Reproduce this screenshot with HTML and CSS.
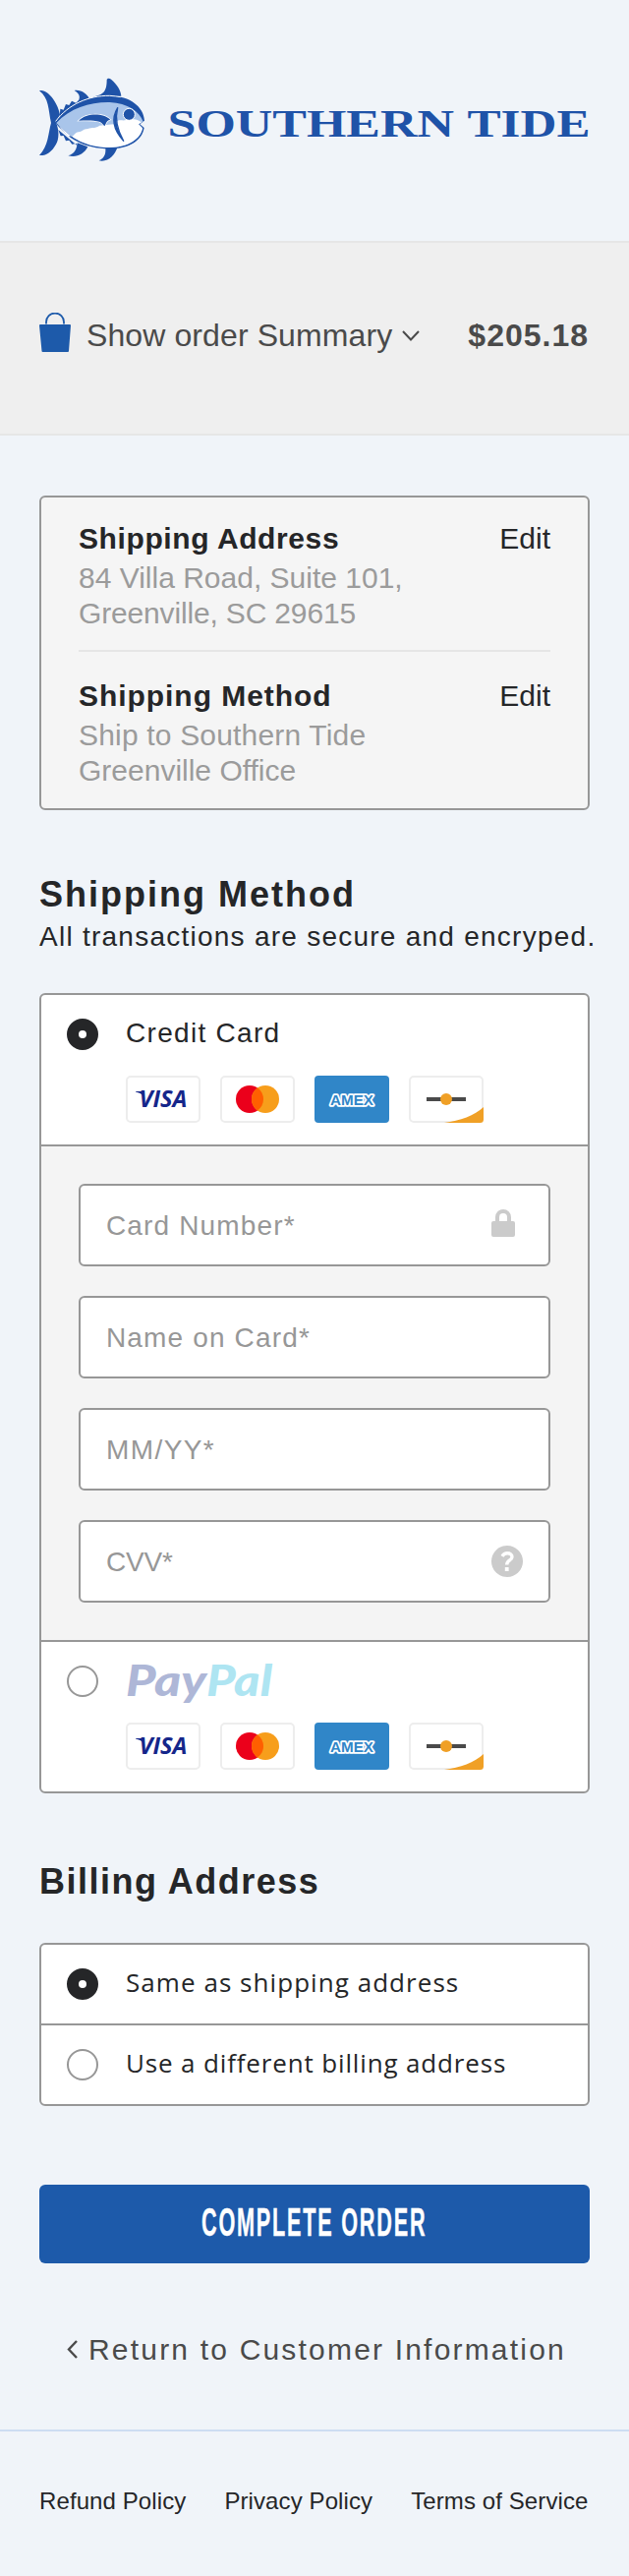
FILE: index.html
```
<!DOCTYPE html>
<html lang="en">
<head>
<meta charset="utf-8">
<title>Southern Tide – Checkout</title>
<link rel="stylesheet" href="styles.css">
</head>
<body>
<svg class="sprite" aria-hidden="true">
  <symbol id="visa" viewBox="0 0 76 48">
    <rect x="1" y="1" width="74" height="46" rx="4" fill="#fff" stroke="#ededed" stroke-width="2"/>
    <path d="M10 16h6.500l1.500 5c-2-2.500-4.500-3.700-8-4.400z" fill="#15268a"/>
    <text x="13.500" y="32" class="visa-word" textLength="49" lengthAdjust="spacingAndGlyphs">VISA</text>
  </symbol>
  <symbol id="mastercard" viewBox="0 0 76 48">
    <rect x="1" y="1" width="74" height="46" rx="4" fill="#fff" stroke="#ededed" stroke-width="2"/>
    <circle cx="30" cy="24" r="14" fill="#eb001b"/>
    <circle cx="46" cy="24" r="14" fill="#f79e1b"/>
    <path d="M38 12.500a14 14 0 0 1 0 23a14 14 0 0 1 0-23z" fill="#ff5f00"/>
  </symbol>
  <symbol id="amex" viewBox="0 0 76 48">
    <rect width="76" height="48" rx="4" fill="#3086c8"/>
    <text x="16" y="30" class="amex-word" textLength="44" lengthAdjust="spacingAndGlyphs">AMEX</text>
  </symbol>
  <symbol id="discover" viewBox="0 0 76 48">
    <rect x="1" y="1" width="74" height="46" rx="4" fill="#fff" stroke="#ededed" stroke-width="2"/>
    <rect x="18" y="22" width="40" height="4" fill="#4a4a4a"/>
    <circle cx="38" cy="24" r="6" fill="#f0a026"/>
    <path d="M36 48C52 46 67 40.500 76 32v12.500a3.500 3.500 0 0 1-3.500 3.500z" fill="#f0a026"/>
  </symbol>
</svg>

<header class="header">
  <svg class="logo" viewBox="0 0 560 84" role="img" aria-label="Southern Tide">
    <g transform="scale(.33333) translate(-30 -30)">
      <g fill="#1f53a8">
        <path d="M30 67C56 59 88 108 93 140L80 162C92 188 90 216 81 230C68 254 50 266 30 264C58 236 57 196 66 165C57 124 60 90 30 67Z"/>
        <path d="M236 34C237 28 244 28 250 33C266 46 279 66 280 83L196 86C224 78 236 72 236 34Z"/>
        <path d="M137 66C158 63 176 77 183 92L143 106C157 92 156 77 137 66Z"/>
        <path d="M92 146L94 122L104 125L111 108L121 111L129 98L142 104L150 96L165 96Z"/>
        <path d="M88 186L95 205L104 204L111 220L121 218L130 230L143 228L150 238Z"/>
        <path d="M118 265C138 260 145 244 146 226L178 238C166 262 142 272 118 265Z"/>
        <path d="M212 280C230 272 233 258 232 243L268 241C260 264 240 286 212 280Z"/>
      </g>
      <path d="M78 163C115 112 175 80 245 82C308 84 348 116 351 158L337 169L350 180C344 218 305 244 245 244C165 244 115 212 78 163Z" fill="#1f53a8"/>
      <path d="M80 160C118 109 180 81 245 82Q262 83 278 86" fill="none" stroke="#fff" stroke-width="3"/>
      <path d="M82 165C125 119 185 101 245 102C300 105 336 130 347 161L333 169L345 181C340 212 303 240 245 240C172 240 124 210 82 165Z" fill="#a9c5ea"/>
      <path d="M90 174C98 188 109 196 118 206L124 205C136 210 136 194 150 193C160 192 163 184 178 183C192 178 202 182 214 173L257 169C270 151 282 160 296 156C310 155 320 151 331 157L342 163L333 169L345 181C340 212 303 240 245 240C174 240 128 211 90 174Z" fill="#fff"/>
      <path d="M150 158C176 133 226 135 247 155C236 157 234 165 230 174C224 171 224 166 213 161C195 156 174 157 150 158Z" fill="#1f53a8" stroke="#fff" stroke-width="4" paint-order="stroke"/>
      <path d="M269 119C250 150 256 186 287 220C270 190 259 158 269 119Z" fill="#1f53a8" stroke="#1f53a8" stroke-width="4" stroke-linejoin="round"/>
      <circle cx="304" cy="139" r="18" fill="#1f53a8" stroke="#fff" stroke-width="3"/>
    </g>
    <text x="130.500" y="58.500" class="logo-word" textLength="291.500" lengthAdjust="spacingAndGlyphs">SOUTHERN</text>
    <text x="435.500" y="58.500" class="logo-word" textLength="125" lengthAdjust="spacingAndGlyphs">TIDE</text>
  </svg>
</header>

<section class="summary">
  <svg class="bag" viewBox="0 0 32 40">
    <path d="M7 12V10a9 9 0 0 1 18 0V12" transform="translate(0 -.5)" fill="none" stroke="#1d5aaa" stroke-width="1.800"/>
    <path d="M1 12H31a1 1 0 0 1 1 1L30 39a1 1 0 0 1-1 1H3.500a1 1 0 0 1-1-1L0 13a1 1 0 0 1 1-1z" fill="#1d5aaa"/>
  </svg>
  <span class="summary-label">Show order Summary</span>
  <svg class="chevron" viewBox="0 0 18 11"><path d="M1 1l8 8.500L17 1" fill="none" stroke="#4a4a4a" stroke-width="2"/></svg>
  <strong class="summary-total">$205.18</strong>
</section>

<main class="main">
  <section class="box review">
    <div class="review-item">
      <div class="review-head"><h3 class="review-title">Shipping Address</h3><a class="edit">Edit</a></div>
      <p class="review-text">84 Villa Road, Suite 101,<br><span class="review-city">Greenville, SC 29615</span></p>
    </div>
    <div class="review-item">
      <div class="review-head"><h3 class="review-title review-title-wide">Shipping Method</h3><a class="edit">Edit</a></div>
      <p class="review-text"><span class="review-ship">Ship to Southern Tide</span><br>Greenville Office</p>
    </div>
  </section>

  <h2 class="heading heading-method">Shipping Method</h2>
  <p class="note">All transactions are secure and encryped.</p>

  <section class="box payment">
    <div class="option">
      <span class="radio radio-on"></span>
      <div class="option-body">
        <div class="option-label">Credit Card</div>
        <div class="cards">
          <svg class="card"><use href="#visa"/></svg>
          <svg class="card"><use href="#mastercard"/></svg>
          <svg class="card"><use href="#amex"/></svg>
          <svg class="card"><use href="#discover"/></svg>
        </div>
      </div>
    </div>
    <div class="fields">
      <div class="field"><span>Card Number*</span>
        <svg class="field-icon" viewBox="0 0 32 32"><path d="M6 13V8a6 6 0 0 1 12 0v5" fill="none" stroke="#cbcbcb" stroke-width="4"/><rect y="12" width="24" height="16" rx="2" fill="#cbcbcb"/></svg>
      </div>
      <div class="field"><span>Name on Card*</span></div>
      <div class="field"><span class="wide">MM/YY*</span></div>
      <div class="field"><span class="tight">CVV*</span>
        <svg class="field-icon" viewBox="0 0 32 32"><circle cx="16" cy="16" r="16" fill="#cbcbcb"/><path d="M11 10.800C12.200 8.700 14 7.800 16.200 7.800C19 7.800 21 9.400 21 11.600C21 15.200 15.700 14.800 15.700 19.500" fill="none" stroke="#fff" stroke-width="3.400"/><rect x="13.800" y="22" width="3.800" height="4" fill="#fff"/></svg>
      </div>
    </div>
    <div class="option">
      <span class="radio"></span>
      <div class="option-body">
        <svg class="paypal" viewBox="0 0 152 40" role="img" aria-label="PayPal">
          <text x="0" y="31" class="paypal-word pay" textLength="82" lengthAdjust="spacingAndGlyphs">Pay</text>
          <text x="82" y="31" class="paypal-word pal" textLength="67" lengthAdjust="spacingAndGlyphs">Pal</text>
        </svg>
        <div class="cards">
          <svg class="card"><use href="#visa"/></svg>
          <svg class="card"><use href="#mastercard"/></svg>
          <svg class="card"><use href="#amex"/></svg>
          <svg class="card"><use href="#discover"/></svg>
        </div>
      </div>
    </div>
  </section>

  <h2 class="heading heading-billing">Billing Address</h2>
  <section class="box billing">
    <div class="choice"><span class="radio radio-on"></span><span class="choice-label">Same as shipping address</span></div>
    <div class="choice"><span class="radio"></span><span class="choice-label choice-label-long">Use a different billing address</span></div>
  </section>

  <button class="submit" type="button">
    <svg class="submit-label" viewBox="0 0 232 46"><text transform="translate(1 33) scale(.535 1)" class="submit-word">COMPLETE ORDER</text></svg>
  </button>

  <a class="back">
    <svg class="back-icon" viewBox="0 0 11 19"><path d="M10 1L2 9.500L10 18" fill="none" stroke="#4a4a4a" stroke-width="2.400"/></svg>
    <span>Return to Customer Information</span>
  </a>
</main>

<footer class="footer">
  <a>Refund Policy</a><a>Privacy Policy</a><a>Terms of Service</a>
</footer>
</body>
</html>
```
FILE: styles.css
```
* { box-sizing: border-box; }
body {
  margin: 0;
  background: #f0f4f9;
  color: #252628;
  font-family: "Liberation Sans", Arial, sans-serif;
  font-size: 28px;
  line-height: 31px;
  white-space: nowrap;
}
h2, h3, p { margin: 0; }
svg { display: block; flex: none; }
.sprite { display: none; }

.header { height: 245px; padding: 80px 40px; }
.logo { width: 560px; height: 84px; overflow: visible; }
.logo-word { font: bold 40.500px "Liberation Serif", serif; fill: #1f53a8; }

.summary {
  display: flex;
  align-items: flex-start;
  height: 198px;
  padding: 71px 41px 0 40px;
  background: #efefef;
  border-top: 2px solid #e6e6e6;
  border-bottom: 2px solid #e6e6e6;
  color: #4a4a4a;
  font-size: 32px;
  line-height: 46px;
}
.bag { width: 32px; height: 40px; margin-right: 16px; }
.summary-label { letter-spacing: .1px; }
.chevron { width: 18px; height: 11px; margin: 18px 0 0 10px; }
.summary-total { margin-left: auto; letter-spacing: 1px; }

.main { padding: 61px 40px 65px; }
.box { border: 2px solid #979797; border-radius: 6px; background: #fff; overflow: hidden; }

.review { padding: 21px 38px 20px; background: #f5f5f5; font-size: 30px; }
.review-item + .review-item { border-top: 2px solid #e6e6e6; margin-top: 19px; padding-top: 24px; }
.review-head { display: flex; justify-content: space-between; line-height: 41px; }
.review-title { font-size: 30px; letter-spacing: .6px; }
.review-title-wide { letter-spacing: .95px; }
.review-text { margin-top: 2px; line-height: 36px; color: #9b9b9b; }
.review-city { letter-spacing: -.16px; }
.review-ship { letter-spacing: .18px; }

.heading { font-size: 36px; line-height: 41px; }
.heading-method { margin-top: 65px; letter-spacing: 2px; }
.heading-billing { margin-top: 69px; letter-spacing: 1.500px; }
.note { margin-top: 7px; letter-spacing: 1.250px; }

.payment, .billing { margin-top: 42px; }
.option { display: flex; gap: 28px; padding: 24px 26px 22px; }
.radio { flex: none; width: 32px; height: 32px; border: 2px solid #979797; border-radius: 50%; background: #fff; }
.radio-on { border: 12px solid #252628; }
.option-label { margin-top: -1px; letter-spacing: 1.300px; }
.cards { display: flex; gap: 20px; margin-top: 28px; }
.card { width: 76px; height: 48px; }
.visa-word { font: italic bold 22.500px "Open Sans", sans-serif; fill: #15268a; }
.amex-word {
  font: bold 15.500px "Liberation Sans", sans-serif;
  fill: #3086c8;
  stroke: #fff;
  stroke-width: 3.600px;
  stroke-linejoin: round;
  paint-order: stroke;
}
.paypal { width: 152px; height: 40px; overflow: visible; }
.paypal + .cards { margin-top: 18px; }
.paypal-word { font: italic 900 43px Lato, sans-serif; }
.pay { fill: #aeb7d7; }
.pal { fill: #aee5f2; }

.fields {
  display: grid;
  gap: 30px;
  padding: 38px;
  background: #f4f4f4;
  border-top: 2px solid #979797;
  border-bottom: 2px solid #979797;
}
.field {
  display: flex;
  align-items: center;
  justify-content: space-between;
  height: 84px;
  padding: 1px 26px 0;
  border: 2px solid #979797;
  border-radius: 6px;
  background: #fff;
  color: #979797;
  letter-spacing: 1.150px;
}
.field .wide { letter-spacing: 1.400px; }
.field .tight { letter-spacing: -.2px; }
.field-icon { width: 32px; height: 32px; align-self: flex-start; margin-top: 23px; }

.choice { display: flex; gap: 28px; padding: 24px 26px; }
.choice + .choice { border-top: 2px solid #979797; }
.choice-label { margin-top: -1px; font-family: "Open Sans", sans-serif; font-size: 26px; line-height: 30px; letter-spacing: 1.050px; }
.choice-label-long { letter-spacing: .850px; }

.submit {
  display: flex;
  align-items: flex-start;
  justify-content: center;
  width: 100%;
  height: 80px;
  margin-top: 80px;
  padding: 19px 0 0;
  border: 0;
  border-radius: 6px;
  background: #1d5aaa;
}
.submit-label { width: 232px; height: 46px; overflow: visible; }
.submit-word {
  font: bold 40.500px "Liberation Sans", sans-serif;
  letter-spacing: 3.300px;
  fill: #fff;
  stroke: #fff;
  stroke-width: .4px;
}

.back {
  display: flex;
  align-items: center;
  gap: 11px;
  margin: 71px 0 0 28px;
  color: #4a4a4a;
  font-size: 30px;
  line-height: 33px;
  letter-spacing: 2.190px;
}
.back-icon { width: 11px; height: 19px; }

.footer {
  display: flex;
  gap: 39px;
  height: 149px;
  padding: 57px 40px 0;
  border-top: 2px solid #cdddf2;
  font-size: 24px;
  line-height: 27px;
  letter-spacing: .1px;
}
```
